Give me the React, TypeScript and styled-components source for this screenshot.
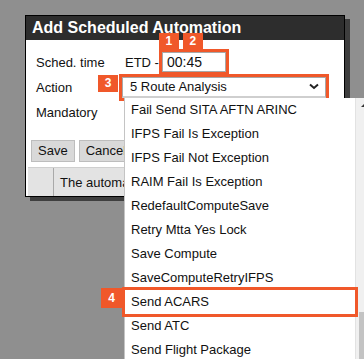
import React from "react";
import styled, { createGlobalStyle } from "styled-components";

const GlobalStyle = createGlobalStyle`
  html, body { margin: 0; padding: 0; }
  body { font-family: "Liberation Sans", Arial, sans-serif; background: #8e8e8e; }
`;

const ORANGE = "#f0582a";

const Page = styled.div`
  position: relative;
  width: 364px;
  height: 359px;
  overflow: hidden;
  box-sizing: border-box;
  padding: 15px 0 0 25px;
  background: #8f8f8f;
`;

const Dialog = styled.div`
  width: 320px;
  box-sizing: border-box;
  border: 1px solid #000;
  background: #fff;
  box-shadow: 5px 4px 0 #3e3e3e;
`;

const TitleBar = styled.div`
  height: 24px;
  line-height: 24px;
  background: #2d2d2d;
  color: #fff;
  font-weight: bold;
  font-size: 16px;
  padding-left: 6px;
  white-space: nowrap;
  overflow: hidden;
`;

const Body = styled.div`
  padding-top: 10px;
  display: flex;
  flex-direction: column;
`;

const Form = styled.div`
  display: grid;
  grid-template-columns: 86px 1fr;
  grid-auto-rows: 24px;
  row-gap: 1px;
  padding-left: 10px;
  font-size: 13px;
  color: #111;
`;

const Label = styled.div`
  display: flex;
  align-items: center;
`;

const Value = styled.div`
  display: flex;
  align-items: center;
`;

const Etd = styled.span`
  margin-left: 3px;
  margin-right: 3px;
`;

const Marked = styled.div`
  position: relative;
  outline: 3px solid ${ORANGE};
`;

const TimeInput = styled.div`
  width: 64px;
  height: 20px;
  box-sizing: border-box;
  border: 1px solid #a8a8a8;
  padding-left: 4px;
  line-height: 18px;
  font-size: 14px;
  color: #111;
  background: #fff;
`;

const Select = styled.div`
  width: 204px;
  height: 21px;
  box-sizing: border-box;
  border: 1px solid #a8a8a8;
  border-bottom: 2px solid #cfcfcf;
  display: flex;
  align-items: center;
  justify-content: space-between;
  padding: 0 6px 0 7px;
  font-size: 13px;
  color: #111;
  background: #fff;
`;

const Badge = styled.div<{ $w?: number; $h?: number }>`
  position: absolute;
  width: ${(p) => p.$w ?? 20}px;
  height: ${(p) => p.$h ?? 16}px;
  background: ${ORANGE};
  color: #fff;
  font-weight: bold;
  font-size: 12px;
  display: flex;
  align-items: center;
  justify-content: center;
  z-index: 3;
`;

const ButtonRow = styled.div`
  display: flex;
  gap: 4px;
  margin-top: 16px;
  padding-left: 5px;
`;

const Button = styled.div`
  height: 22px;
  box-sizing: border-box;
  border: 1px solid #bdbdbd;
  background: #d9d9d9;
  padding: 0 6px;
  font-size: 13px;
  line-height: 20px;
  color: #111;
`;

const StatusBar = styled.div`
  margin: 5px 2px 0 2px;
  height: 29px;
  display: flex;
  background: #e3e3e3;
  border-top: 1px solid #cfcfcf;
  box-sizing: border-box;
`;

const StatusCell = styled.div<{ $w?: number }>`
  ${(p) => (p.$w ? `width: ${p.$w}px;` : "flex: 1;")}
  border-right: 1px solid #a9a9a9;
  display: flex;
  align-items: center;
  padding-left: 6px;
  font-size: 13px;
  color: #111;
  box-sizing: border-box;
  white-space: nowrap;
  overflow: hidden;
`;

const List = styled.div`
  position: absolute;
  left: 124px;
  top: 98px;
  display: flex;
  background: #fff;
  border-left: 1px solid #c4c4c4;
  z-index: 2;
`;

const Items = styled.div`
  width: 230px;
  display: flex;
  flex-direction: column;
`;

const Item = styled.div<{ $marked?: boolean }>`
  position: relative;
  height: 24px;
  line-height: 24px;
  padding-left: 6px;
  font-size: 13px;
  color: #111;
  white-space: nowrap;
  ${(p) => (p.$marked ? `outline: 3px solid ${ORANGE}; z-index: 1;` : "")}
`;

const Scrollbar = styled.div`
  width: 12px;
  background: #f0f0f0;
  border-left: 1px solid #e2e2e2;
  display: flex;
  flex-direction: column;
  align-items: center;
`;

const ArrowUp = styled.div`
  margin-top: 5px;
  margin-left: 2px;
  width: 0;
  height: 0;
  border-left: 4px solid transparent;
  border-bottom: 4px solid #333;
`;

const Thumb = styled.div`
  margin-top: 205px;
  width: 6px;
  height: 60px;
  background: #c3c3c3;
`;

const items = [
  "Fail Send SITA AFTN ARINC",
  "IFPS Fail Is Exception",
  "IFPS Fail Not Exception",
  "RAIM Fail Is Exception",
  "RedefaultComputeSave",
  "Retry Mtta Yes Lock",
  "Save Compute",
  "SaveComputeRetryIFPS",
  "Send ACARS",
  "Send ATC",
  "Send Flight Package",
];

const Chevron = () => (
  <svg width="10" height="7" viewBox="0 0 10 7">
    <polyline points="1,1.5 5,5 9,1.5" fill="none" stroke="#222" strokeWidth="2" />
  </svg>
);

export default function App() {
  return (
    <>
      <GlobalStyle />
      <Page>
        <Dialog>
          <TitleBar>Add Scheduled Automation</TitleBar>
          <Body>
            <Form>
              <Label>Sched. time</Label>
              <Value>
                <Etd>ETD -</Etd>
                <Marked>
                  <Badge style={{ left: -3, top: -19 }}>1</Badge>
                  <Badge style={{ left: 21, top: -19 }}>2</Badge>
                  <TimeInput>00:45</TimeInput>
                </Marked>
              </Value>
              <Label>Action</Label>
              <Value>
                <Marked>
                  <Badge $h={17} style={{ left: -24, top: -2 }}>3</Badge>
                  <Select>
                    <span>5 Route Analysis</span>
                    <Chevron />
                  </Select>
                </Marked>
              </Value>
              <Label>Mandatory</Label>
              <Value />
            </Form>
            <ButtonRow>
              <Button>Save</Button>
              <Button>Cancel</Button>
            </ButtonRow>
            <StatusBar>
              <StatusCell $w={26} />
              <StatusCell>The automation has been scheduled</StatusCell>
            </StatusBar>
          </Body>
        </Dialog>
        <List>
          <Items>
            {items.map((t) => (
              <Item key={t} $marked={t === "Send ACARS"}>
                {t === "Send ACARS" && (
                  <Badge $w={21} $h={20} style={{ left: -24, top: -2 }}>4</Badge>
                )}
                {t}
              </Item>
            ))}
          </Items>
          <Scrollbar>
            <ArrowUp />
            <Thumb />
          </Scrollbar>
        </List>
      </Page>
    </>
  );
}
